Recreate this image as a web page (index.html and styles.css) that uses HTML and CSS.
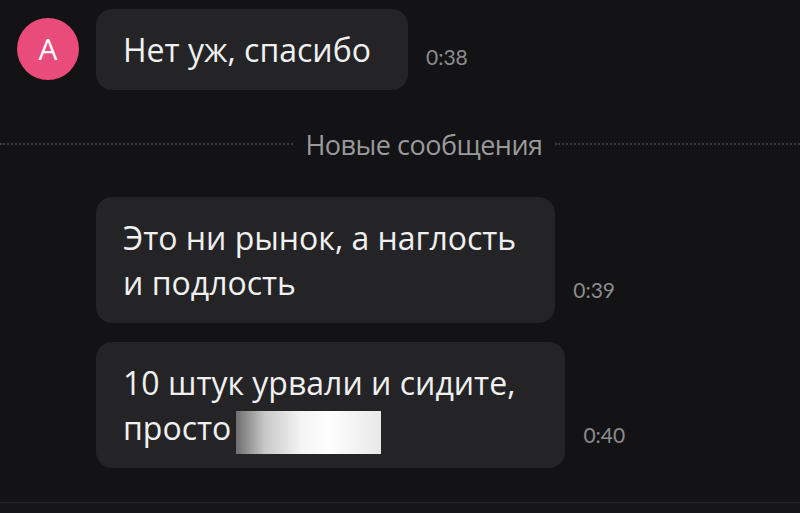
FILE: index.html
```html
<!DOCTYPE html>
<html lang="ru">
<head>
  <meta charset="UTF-8" />
  <meta name="viewport" content="width=device-width, initial-scale=1" />
  <title>Чат</title>
  <link rel="stylesheet" href="styles.css">
</head>
<body>

  <div class="chat">
    <div class="row first">
      <div class="avatar-col">
        <div class="avatar">A</div>
      </div>
      <div class="bubble b1">Нет уж, спасибо</div>
      <span class="time">0:38</span>
    </div>

    <div class="divider">
      <span class="dots left"></span>
      <span class="divider-text">Новые сообщения</span>
      <span class="dots"></span>
    </div>

    <div class="row">
      <div class="avatar-col"></div>
      <div class="bubble b2">Это ни рынок, а наглость<br>и подлость</div>
      <span class="time">0:39</span>
    </div>

    <div class="row">
      <div class="avatar-col"></div>
      <div class="bubble b3">10 штук урвали и сидите,<br>просто <span class="hidden-word"></span></div>
      <span class="time">0:40</span>
    </div>
  </div>

  <div class="bottom-bar"></div>

</body>
</html>
```

FILE: styles.css
```css
body {
  margin: 0;
  background: #131214;
  font-family: "Open Sans", Roboto, sans-serif;
  color: #f0f0f0;
  height: 513px;
  overflow: hidden;
  display: flex;
  flex-direction: column;
}
.chat {
  flex: 1;
  padding-top: 9px;
}
.row {
  display: flex;
  align-items: flex-end;
  margin-bottom: 19px;
}
.avatar-col {
  width: 96px;
  flex-shrink: 0;
  align-self: flex-start;
}
.avatar {
  width: 62px;
  height: 62px;
  margin: 9px 0 0 17px;
  border-radius: 50%;
  background: #e94b7a;
  color: #fff;
  font-size: 30px;
  line-height: 62px;
  text-align: center;
}
.bubble {
  background: #242426;
  border-radius: 16px;
  padding: 18px 27px;
  font-size: 32px;
  line-height: 45px;
}
.b1 { padding-right: 37px; }
.b2 { padding-right: 39px; }
.b3 { padding-right: 50px; }
.time {
  margin: 0 0 21px 18px;
  font-family: Lato, sans-serif;
  font-size: 21px;
  color: #8c8c8c;
}
.divider {
  display: flex;
  align-items: center;
  height: 70px;
  margin: 17px 0 18px;
}
.dots {
  flex: 1 1 0;
  border-top: 2px dotted #3a3a3c;
}
.dots.left {
  flex-basis: 48px;
}
.divider-text {
  padding: 0 12px;
  font-size: 27px;
  letter-spacing: -0.5px;
  color: #9a9a9a;
}
.hidden-word {
  display: inline-block;
  width: 145px;
  height: 43px;
  margin: 0 0 -4px -4px;
  vertical-align: -10px;
  background: linear-gradient(90deg, #6e6e6e 0%, #c8c8c8 20%, #f4f4f4 45%, #fefefe 65%, #e8e8e8 100%);
}
.bottom-bar {
  height: 10px;
  border-top: 1px solid #2a2a2c;
  background: #161618;
}
```
